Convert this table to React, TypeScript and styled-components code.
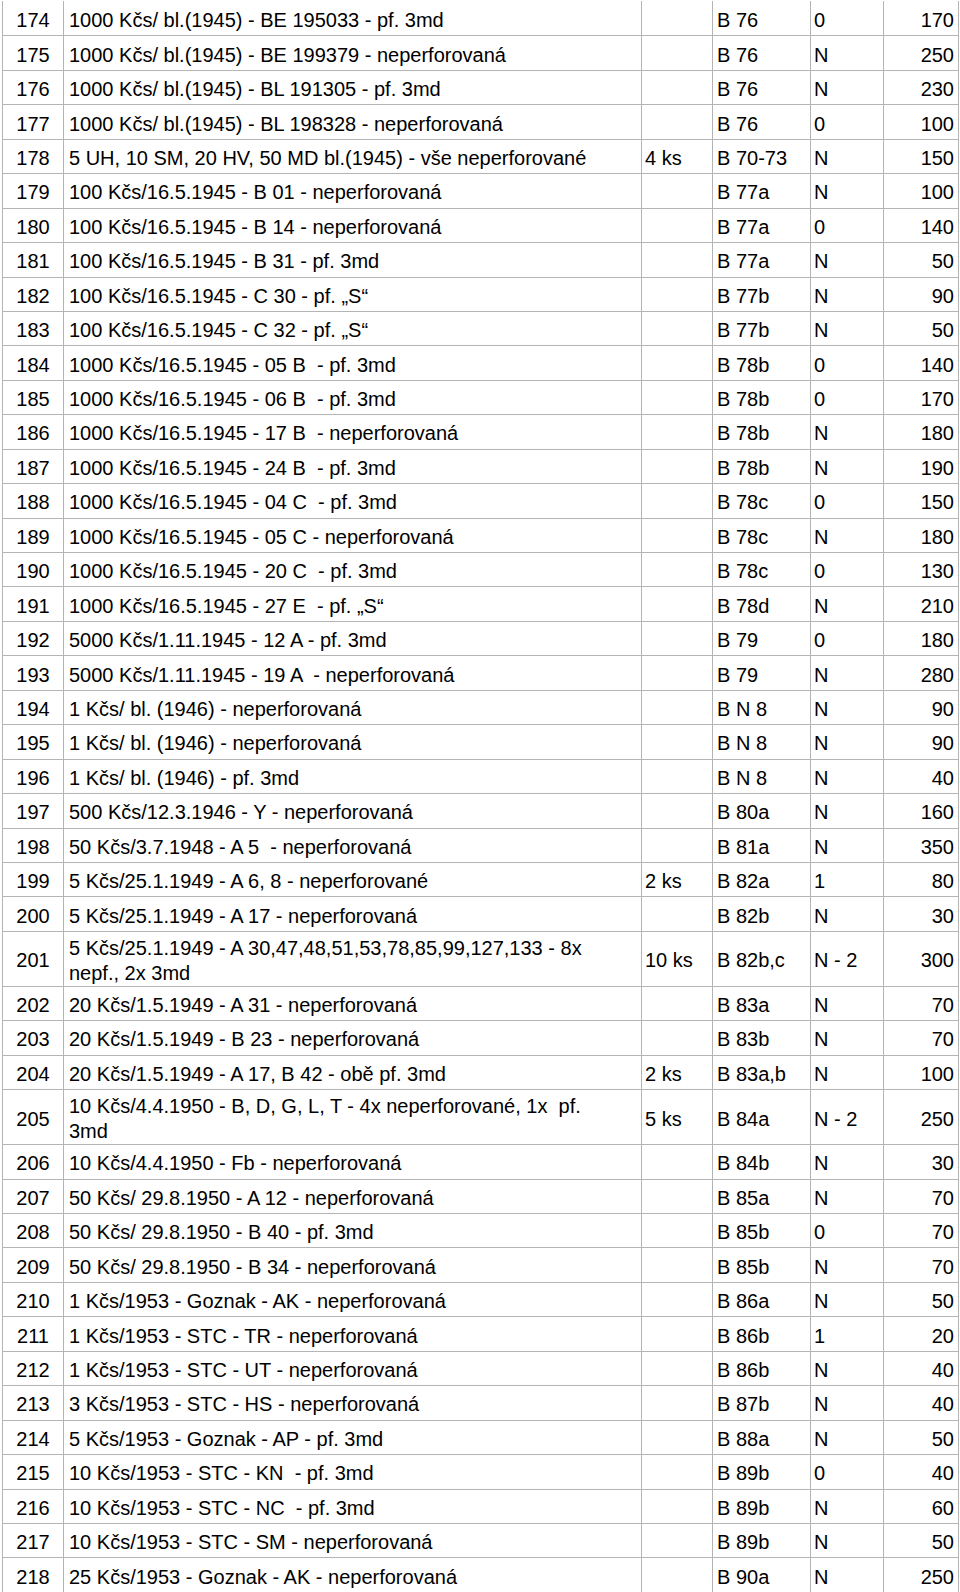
import React from "react";
import styled, { createGlobalStyle } from "styled-components";

const GlobalStyle = createGlobalStyle`
  html, body {
    margin: 0;
    padding: 0;
    background: #ffffff;
  }
  body {
    font-family: "Liberation Sans", Arial, sans-serif;
    color: #000000;
  }
`;

type Row = {
  no: string;
  desc: string;
  qty?: string;
  cat: string;
  grade: string;
  price: string;
  tall?: boolean;
};

const rows: Row[] = [
  { no: "174", desc: "1000 Kčs/ bl.(1945) - BE 195033 - pf. 3md", cat: "B 76", grade: "0", price: "170" },
  { no: "175", desc: "1000 Kčs/ bl.(1945) - BE 199379 - neperforovaná", cat: "B 76", grade: "N", price: "250" },
  { no: "176", desc: "1000 Kčs/ bl.(1945) - BL 191305 - pf. 3md", cat: "B 76", grade: "N", price: "230" },
  { no: "177", desc: "1000 Kčs/ bl.(1945) - BL 198328 - neperforovaná", cat: "B 76", grade: "0", price: "100" },
  { no: "178", desc: "5 UH, 10 SM, 20 HV, 50 MD bl.(1945) - vše neperforované", qty: "4 ks", cat: "B 70-73", grade: "N", price: "150" },
  { no: "179", desc: "100 Kčs/16.5.1945 - B 01 - neperforovaná", cat: "B 77a", grade: "N", price: "100" },
  { no: "180", desc: "100 Kčs/16.5.1945 - B 14 - neperforovaná", cat: "B 77a", grade: "0", price: "140" },
  { no: "181", desc: "100 Kčs/16.5.1945 - B 31 - pf. 3md", cat: "B 77a", grade: "N", price: "50" },
  { no: "182", desc: "100 Kčs/16.5.1945 - C 30 - pf. „S“", cat: "B 77b", grade: "N", price: "90" },
  { no: "183", desc: "100 Kčs/16.5.1945 - C 32 - pf. „S“", cat: "B 77b", grade: "N", price: "50" },
  { no: "184", desc: "1000 Kčs/16.5.1945 - 05 B  - pf. 3md", cat: "B 78b", grade: "0", price: "140" },
  { no: "185", desc: "1000 Kčs/16.5.1945 - 06 B  - pf. 3md", cat: "B 78b", grade: "0", price: "170" },
  { no: "186", desc: "1000 Kčs/16.5.1945 - 17 B  - neperforovaná", cat: "B 78b", grade: "N", price: "180" },
  { no: "187", desc: "1000 Kčs/16.5.1945 - 24 B  - pf. 3md", cat: "B 78b", grade: "N", price: "190" },
  { no: "188", desc: "1000 Kčs/16.5.1945 - 04 C  - pf. 3md", cat: "B 78c", grade: "0", price: "150" },
  { no: "189", desc: "1000 Kčs/16.5.1945 - 05 C - neperforovaná", cat: "B 78c", grade: "N", price: "180" },
  { no: "190", desc: "1000 Kčs/16.5.1945 - 20 C  - pf. 3md", cat: "B 78c", grade: "0", price: "130" },
  { no: "191", desc: "1000 Kčs/16.5.1945 - 27 E  - pf. „S“", cat: "B 78d", grade: "N", price: "210" },
  { no: "192", desc: "5000 Kčs/1.11.1945 - 12 A - pf. 3md", cat: "B 79", grade: "0", price: "180" },
  { no: "193", desc: "5000 Kčs/1.11.1945 - 19 A  - neperforovaná", cat: "B 79", grade: "N", price: "280" },
  { no: "194", desc: "1 Kčs/ bl. (1946) - neperforovaná", cat: "B N 8", grade: "N", price: "90" },
  { no: "195", desc: "1 Kčs/ bl. (1946) - neperforovaná", cat: "B N 8", grade: "N", price: "90" },
  { no: "196", desc: "1 Kčs/ bl. (1946) - pf. 3md", cat: "B N 8", grade: "N", price: "40" },
  { no: "197", desc: "500 Kčs/12.3.1946 - Y - neperforovaná", cat: "B 80a", grade: "N", price: "160" },
  { no: "198", desc: "50 Kčs/3.7.1948 - A 5  - neperforovaná", cat: "B 81a", grade: "N", price: "350" },
  { no: "199", desc: "5 Kčs/25.1.1949 - A 6, 8 - neperforované", qty: "2 ks", cat: "B 82a", grade: "1", price: "80" },
  { no: "200", desc: "5 Kčs/25.1.1949 - A 17 - neperforovaná", cat: "B 82b", grade: "N", price: "30" },
  { no: "201", desc: "5 Kčs/25.1.1949 - A 30,47,48,51,53,78,85,99,127,133 - 8x\nnepf., 2x 3md", qty: "10 ks", cat: "B 82b,c", grade: "N - 2", price: "300", tall: true },
  { no: "202", desc: "20 Kčs/1.5.1949 - A 31 - neperforovaná", cat: "B 83a", grade: "N", price: "70" },
  { no: "203", desc: "20 Kčs/1.5.1949 - B 23 - neperforovaná", cat: "B 83b", grade: "N", price: "70" },
  { no: "204", desc: "20 Kčs/1.5.1949 - A 17, B 42 - obě pf. 3md", qty: "2 ks", cat: "B 83a,b", grade: "N", price: "100" },
  { no: "205", desc: "10 Kčs/4.4.1950 - B, D, G, L, T - 4x neperforované, 1x  pf.\n3md", qty: "5 ks", cat: "B 84a", grade: "N - 2", price: "250", tall: true },
  { no: "206", desc: "10 Kčs/4.4.1950 - Fb - neperforovaná", cat: "B 84b", grade: "N", price: "30" },
  { no: "207", desc: "50 Kčs/ 29.8.1950 - A 12 - neperforovaná", cat: "B 85a", grade: "N", price: "70" },
  { no: "208", desc: "50 Kčs/ 29.8.1950 - B 40 - pf. 3md", cat: "B 85b", grade: "0", price: "70" },
  { no: "209", desc: "50 Kčs/ 29.8.1950 - B 34 - neperforovaná", cat: "B 85b", grade: "N", price: "70" },
  { no: "210", desc: "1 Kčs/1953 - Goznak - AK - neperforovaná", cat: "B 86a", grade: "N", price: "50" },
  { no: "211", desc: "1 Kčs/1953 - STC - TR - neperforovaná", cat: "B 86b", grade: "1", price: "20" },
  { no: "212", desc: "1 Kčs/1953 - STC - UT - neperforovaná", cat: "B 86b", grade: "N", price: "40" },
  { no: "213", desc: "3 Kčs/1953 - STC - HS - neperforovaná", cat: "B 87b", grade: "N", price: "40" },
  { no: "214", desc: "5 Kčs/1953 - Goznak - AP - pf. 3md", cat: "B 88a", grade: "N", price: "50" },
  { no: "215", desc: "10 Kčs/1953 - STC - KN  - pf. 3md", cat: "B 89b", grade: "0", price: "40" },
  { no: "216", desc: "10 Kčs/1953 - STC - NC  - pf. 3md", cat: "B 89b", grade: "N", price: "60" },
  { no: "217", desc: "10 Kčs/1953 - STC - SM - neperforovaná", cat: "B 89b", grade: "N", price: "50" },
  { no: "218", desc: "25 Kčs/1953 - Goznak - AK - neperforovaná", cat: "B 90a", grade: "N", price: "250" },
];

const Page = styled.div`
  padding: 1px 0 0 2px;
  width: 960px;
  box-sizing: border-box;
`;

const Table = styled.table`
  border-collapse: collapse;
  table-layout: fixed;
  width: 956px;
  font-family: "Liberation Sans", Arial, sans-serif;
  font-size: 20px;
  color: #000000;
`;

const Col = styled.col<{ $w: number }>`
  width: ${(p) => p.$w}px;
`;

const Tr = styled.tr<{ $tall?: boolean }>`
  height: ${(p) => (p.$tall ? "53.5px" : "34.45px")};
  &:first-child td {
    border-top-color: transparent;
  }
`;

const Cell = styled.td<{ $align?: "left" | "center" | "right"; $pl?: number; $pr?: number }>`
  border: 1px solid #b4b4b4;
  padding: 4px ${(p) => p.$pr ?? 0}px 0 ${(p) => p.$pl ?? 0}px;
  text-align: ${(p) => p.$align ?? "left"};
  vertical-align: middle;
  line-height: 25px;
  white-space: pre-wrap;
  overflow: hidden;
`;

const widths = [61, 578, 71, 98, 73, 75];

export default function App() {
  return (
    <>
      <GlobalStyle />
      <Page>
        <Table>
          <colgroup>
            {widths.map((w, i) => (
              <Col key={i} $w={w} />
            ))}
          </colgroup>
          <tbody>
            {rows.map((r) => (
              <Tr key={r.no} $tall={r.tall}>
                <Cell $align="center">{r.no}</Cell>
                <Cell $pl={5}>{r.desc}</Cell>
                <Cell $pl={3}>{r.qty ?? ""}</Cell>
                <Cell $pl={4}>{r.cat}</Cell>
                <Cell $pl={3}>{r.grade}</Cell>
                <Cell $align="right" $pr={4}>{r.price}</Cell>
              </Tr>
            ))}
          </tbody>
        </Table>
      </Page>
    </>
  );
}
